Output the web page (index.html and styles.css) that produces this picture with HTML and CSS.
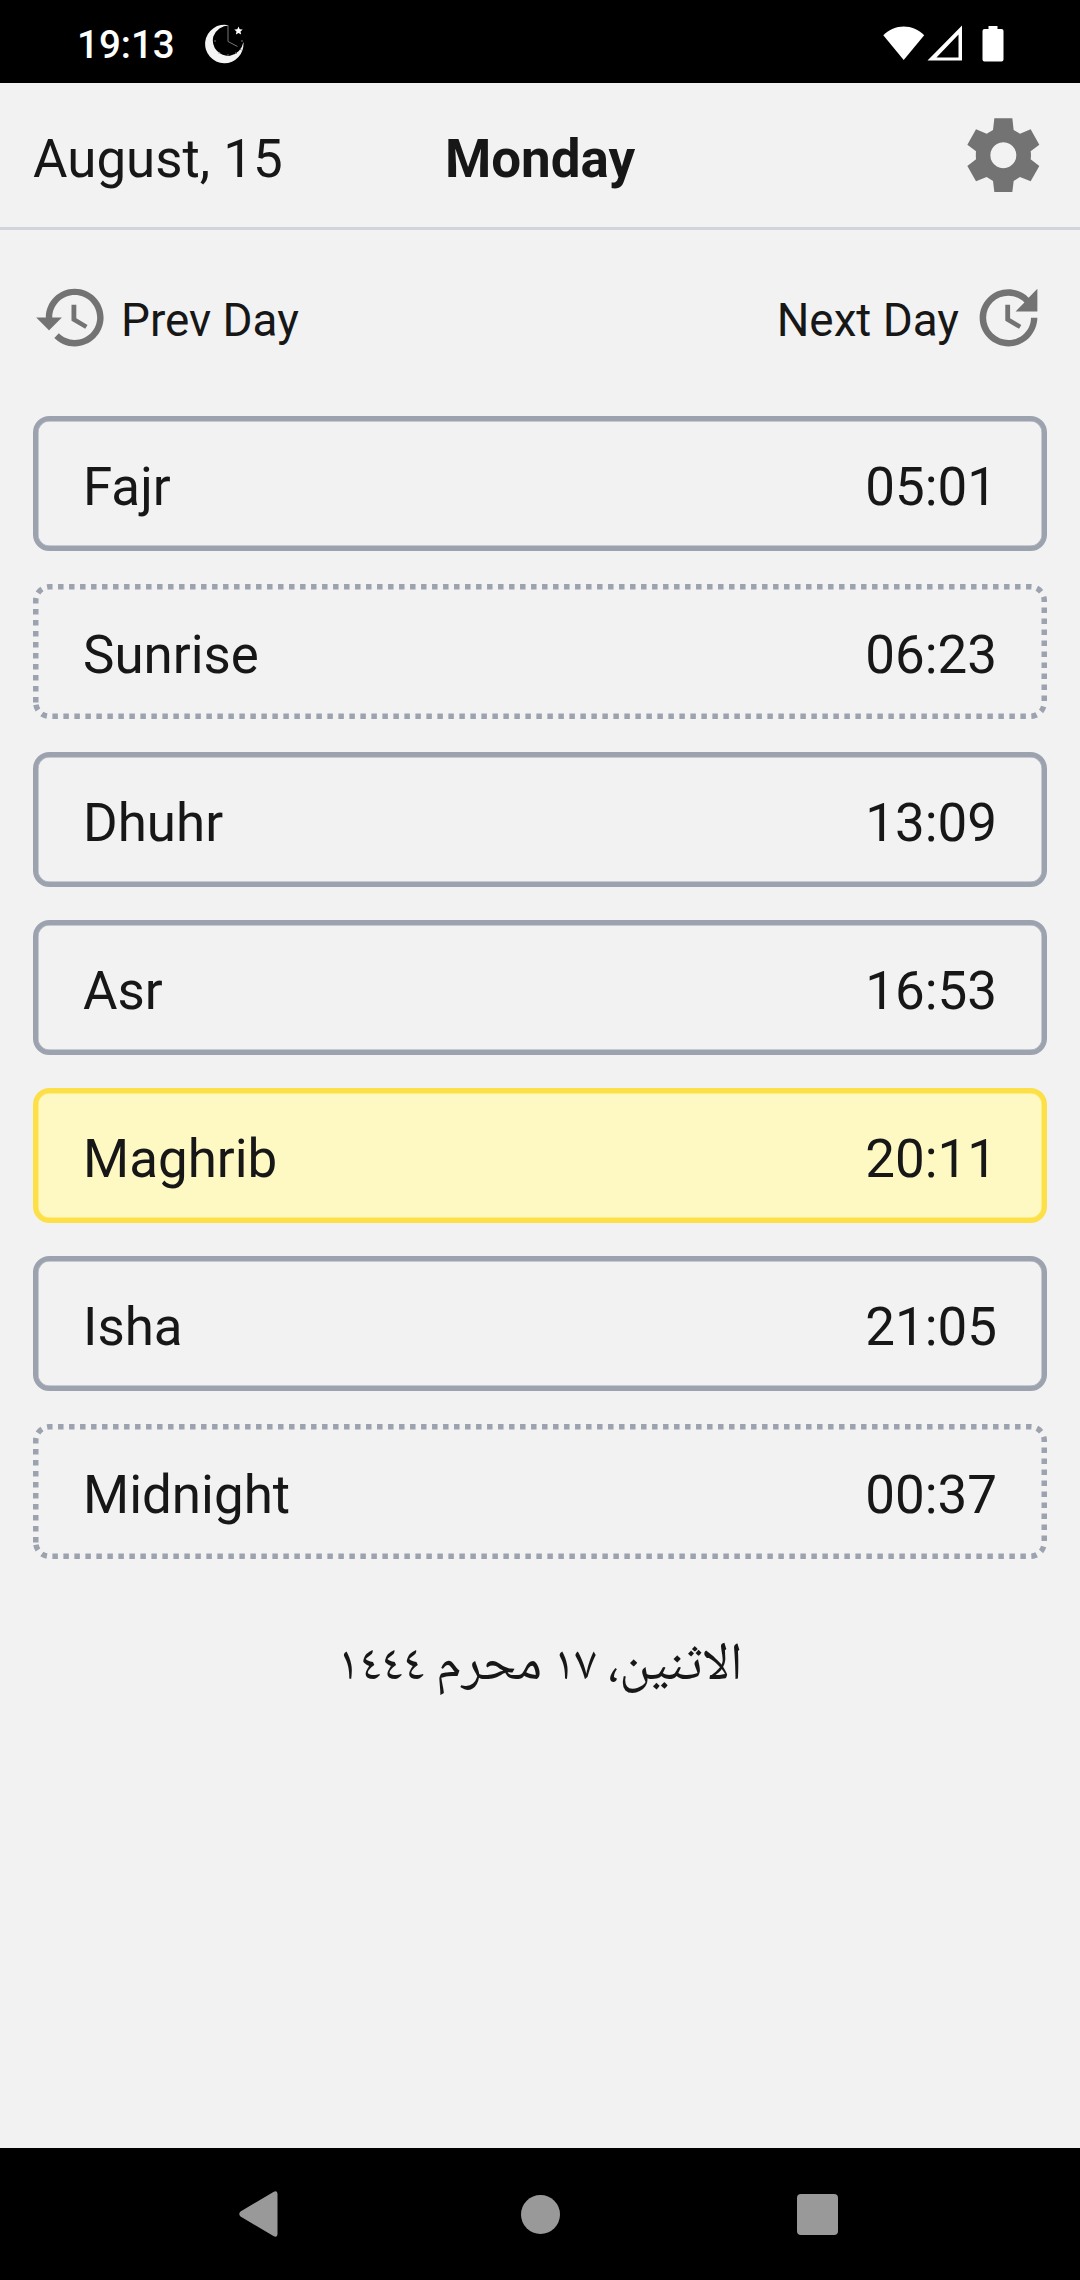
FILE: index.html
```html
<!DOCTYPE html>
<html lang="en">
<head>
<meta charset="utf-8">
<title>Prayer times</title>
<link rel="stylesheet" href="styles.css">
</head>
<body>
<div class="screen">
  <div class="status">
    <span class="clock">19:13</span>
    <svg class="moon" viewBox="0 0 40 40">
      <path d="M24 1.4A19.2 19.2 0 1 0 38.4 18 17 17 0 0 1 25 31.8 15.6 15.6 0 0 1 8.300 12.500 17 17 0 0 1 24 1.400Z" fill="#f4f4f4"/>
      <path d="M23 2V17.500L32.500 22.500M9 17h2M23 30v2M15 28l-1 1.500M30.500 28.500l1 1.500M36 17h2M35 25l1.500 1" fill="none" stroke="#777" stroke-width="1"/>
      <path d="M33.500 2.500l1.200 2.700 3 .3-2.200 2 .6 3-2.600-1.500-2.600 1.500.6-3-2.200-2 3-.3z" fill="#fff"/>
    </svg>
    <span class="space"></span>
    <svg class="signals" viewBox="0 0 122 38">
      <path d="M.300 10.200C11.500-1.500 30-1.500 41.200 10.200L20.700 35Z" fill="#fff"/>
      <path d="M79 0.500V35.500H44.500ZM75.500 9.500L53.500 32.500H75.500Z" fill="#fff" fill-rule="evenodd"/>
      <path d="M105.500 1h9v3h4a2 2 0 0 1 2 2v28.500a2 2 0 0 1-2 2h-17a2 2 0 0 1-2-2V6a2 2 0 0 1 2-2h4z" fill="#fff"/>
    </svg>
  </div>
  <header class="header">
    <span class="date">August, 15</span>
    <span class="weekday">Monday</span>
    <svg class="gear" viewBox="320 353 219 223">
      <path fill-rule="evenodd" d="M402 354H456L460 389 479 400 511 387 537 433 511 453Q513 465 511 477L537 497 511 543 479 530 460 542 456 575H402L398 542 379 530 347 543 321 497 347 477Q346 465 347 453L321 433 347 387 379 400 398 389ZM429 426a39 39 0 1 0 .01 0Z"/>
    </svg>
  </header>
  <main class="content">
    <nav class="days">
      <span class="day"><svg class="icon" viewBox="0 0 24 24"><path d="M13 3c-4.970 0-9 4.030-9 9H1l3.890 3.890.07.14L9 12H6c0-3.870 3.130-7 7-7s7 3.130 7 7-3.130 7-7 7c-1.930 0-3.680-.79-4.940-2.060l-1.420 1.420C8.270 19.990 10.510 21 13 21c4.970 0 9-4.030 9-9s-4.030-9-9-9zm-1 5v5l4.280 2.540.72-1.210-3.500-2.080V8H12z"/></svg><span class="label">Prev Day</span></span>
      <span class="day"><span class="label">Next Day</span><svg class="icon" viewBox="0 0 24 24"><path d="M21 10.120h-6.780l2.740-2.820c-2.730-2.700-7.150-2.800-9.880-.1-2.730 2.710-2.730 7.080 0 9.790s7.150 2.710 9.880 0C18.320 15.650 19 14.080 19 12.100h2c0 1.980-.88 4.550-2.640 6.290-3.510 3.480-9.210 3.480-12.720 0-3.500-3.470-3.530-9.110-.02-12.580s9.140-3.470 12.650 0L21 3v7.120zM12.500 8v4.250l3.500 2.080-.72 1.210L11 13V8h1.500z"/></svg></span>
    </nav>
    <section class="times">
      <div class="card"><span>Fajr</span><span>05:01</span></div>
      <div class="card dotted"><svg class="outline" viewBox="0 0 1014 135"><path d="M2.750 118.500V16.500A13.750 13.750 0 0 1 16.500 2.750H997.500A13.750 13.750 0 0 1 1011.250 16.500V118.500A13.750 13.750 0 0 1 997.500 132.250H16.500A13.750 13.750 0 0 1 2.750 118.500Z"/></svg><span>Sunrise</span><span>06:23</span></div>
      <div class="card"><span>Dhuhr</span><span>13:09</span></div>
      <div class="card"><span>Asr</span><span>16:53</span></div>
      <div class="card active"><span>Maghrib</span><span>20:11</span></div>
      <div class="card"><span>Isha</span><span>21:05</span></div>
      <div class="card dotted"><svg class="outline" viewBox="0 0 1014 135"><path d="M2.750 118.500V16.500A13.750 13.750 0 0 1 16.500 2.750H997.500A13.750 13.750 0 0 1 1011.250 16.500V118.500A13.750 13.750 0 0 1 997.500 132.250H16.500A13.750 13.750 0 0 1 2.750 118.500Z"/></svg><span>Midnight</span><span>00:37</span></div>
    </section>
    <p class="hijri" lang="ar" dir="rtl">الاثنين، <span class="num">١٧</span> محرم <span class="num">١٤٤٤</span></p>
  </main>
  <div class="navbar">
    <svg class="back" viewBox="0 0 39 46"><path d="M34 1.200Q38.500-1.500 38.500 3V43Q38.500 47.500 34 44.800L1.500 25.500Q-1 23 1.500 20.500Z"/></svg>
    <span class="home"></span>
    <span class="recent"></span>
  </div>
</div>
</body>
</html>
```
FILE: styles.css
```css
* { box-sizing: border-box; }
body { margin: 0; }
.screen {
  width: 1080px;
  height: 2280px;
  display: flex;
  flex-direction: column;
  background: #f2f2f2;
  color: #171717;
  font: 400 52.900px/80px Roboto, sans-serif;
}
.status {
  height: 83px;
  padding: 4px 75px 0 77px;
  display: flex;
  align-items: center;
  background: #000;
  color: #fff;
}
.clock { font-size: 38.500px; font-weight: 500; padding-top: 2px; }
.moon { width: 40px; height: 40px; margin-left: 30px; }
.space { flex: 1; }
.signals { width: 122px; height: 38px; }
.header {
  height: 147px;
  padding: 1px 33px 0;
  display: grid;
  grid-template-columns: 1fr auto 1fr;
  align-items: center;
  border-bottom: 3px solid #d1d5db;
}
.date, .weekday { padding-top: 7px; }
.weekday { font-weight: 700; }
.gear { width: 73px; height: 74.300px; margin-right: 7px; justify-self: end; fill: #737373; }
.content { flex: 1; padding: 47px 33px 0; }
.days {
  display: flex;
  justify-content: space-between;
  font-size: 45.800px;
}
.day { display: flex; align-items: center; gap: 11px; }
.label { padding-top: 4px; }
.icon { width: 77px; height: 77px; margin-bottom: 3px; fill: #737373; }
.times { display: flex; flex-direction: column; gap: 33px; padding-top: 55px; }
.card {
  position: relative;
  height: 135px;
  padding: 7px 45px 0;
  display: flex;
  align-items: center;
  justify-content: space-between;
  border: 5px solid #9ca3af;
  border-radius: 16.500px;
  box-shadow: inset 0 0 0 0.500px #9ca3af;
}
.active {
  background: #fef9c3;
  border-color: #fde047;
  box-shadow: inset 0 0 0 0.500px #fde047;
}
.dotted { border: 0; padding: 7px 50px 0; box-shadow: none; }
.outline { position: absolute; inset: 0; width: 100%; height: 100%; }
.outline path { fill: none; stroke: #9ca3af; stroke-width: 5.500; stroke-dasharray: 5.500 5.500; }
.hijri {
  margin: 69px 0 0;
  text-align: center;
  font-family: "Noto Naskh Arabic", Roboto, sans-serif;
  font-size: 52.800px;
  word-spacing: -0.500px;
}
.num { font-size: 48.500px; }
.navbar {
  height: 132px;
  padding: 0 242px 0 239px;
  display: flex;
  align-items: center;
  justify-content: space-between;
  background: #000;
}
.back { width: 39px; height: 46px; fill: #999; }
.home { width: 39px; height: 39px; margin-left: 5px; border-radius: 50%; background: #999; }
.recent { width: 41px; height: 41px; border-radius: 4px; background: #999; }
```
